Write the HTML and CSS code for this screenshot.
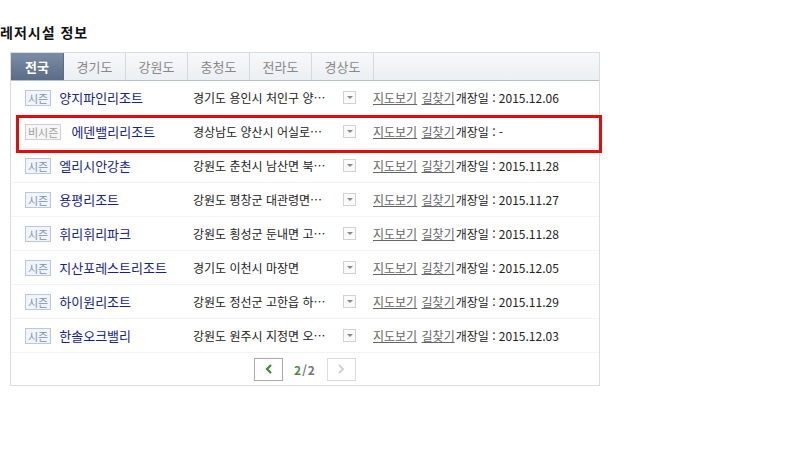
FILE: index.html
```html
<!DOCTYPE html>
<html lang="ko">
<head>
    <meta charset="UTF-8">
    <title>레저시설 정보</title>
    <link rel="stylesheet" href="styles.css">
</head>
<body>
    <h3 class="title">레저시설 정보</h3>

    <div class="leisure">
        <ul class="tabs">
            <li class="on">전국</li>
            <li>경기도</li>
            <li>강원도</li>
            <li>충청도</li>
            <li>전라도</li>
            <li>경상도</li>
        </ul>

        <ul class="list">
            <li class="row">
                <div class="name"><span class="badge">시즌</span><a href="#">양지파인리조트</a></div>
                <div class="addr">경기도 용인시 처인구 양…</div>
                <span class="more"></span>
                <div class="links"><a href="#">지도보기</a> <a href="#">길찾기</a><span>개장일 : 2015.12.06</span></div>
            </li>
            <li class="row picked">
                <div class="name"><span class="badge off">비시즌</span><a href="#">에덴밸리리조트</a></div>
                <div class="addr">경상남도 양산시 어실로…</div>
                <span class="more"></span>
                <div class="links"><a href="#">지도보기</a> <a href="#">길찾기</a><span>개장일 : -</span></div>
            </li>
            <li class="row">
                <div class="name"><span class="badge">시즌</span><a href="#">엘리시안강촌</a></div>
                <div class="addr">강원도 춘천시 남산면 북…</div>
                <span class="more"></span>
                <div class="links"><a href="#">지도보기</a> <a href="#">길찾기</a><span>개장일 : 2015.11.28</span></div>
            </li>
            <li class="row">
                <div class="name"><span class="badge">시즌</span><a href="#">용평리조트</a></div>
                <div class="addr">강원도 평창군 대관령면…</div>
                <span class="more"></span>
                <div class="links"><a href="#">지도보기</a> <a href="#">길찾기</a><span>개장일 : 2015.11.27</span></div>
            </li>
            <li class="row">
                <div class="name"><span class="badge">시즌</span><a href="#">휘리휘리파크</a></div>
                <div class="addr">강원도 횡성군 둔내면 고…</div>
                <span class="more"></span>
                <div class="links"><a href="#">지도보기</a> <a href="#">길찾기</a><span>개장일 : 2015.11.28</span></div>
            </li>
            <li class="row">
                <div class="name"><span class="badge">시즌</span><a href="#">지산포레스트리조트</a></div>
                <div class="addr">경기도 이천시 마장면</div>
                <span class="more"></span>
                <div class="links"><a href="#">지도보기</a> <a href="#">길찾기</a><span>개장일 : 2015.12.05</span></div>
            </li>
            <li class="row">
                <div class="name"><span class="badge">시즌</span><a href="#">하이원리조트</a></div>
                <div class="addr">강원도 정선군 고한읍 하…</div>
                <span class="more"></span>
                <div class="links"><a href="#">지도보기</a> <a href="#">길찾기</a><span>개장일 : 2015.11.29</span></div>
            </li>
            <li class="row">
                <div class="name"><span class="badge">시즌</span><a href="#">한솔오크밸리</a></div>
                <div class="addr">강원도 원주시 지정면 오…</div>
                <span class="more"></span>
                <div class="links"><a href="#">지도보기</a> <a href="#">길찾기</a><span>개장일 : 2015.12.03</span></div>
            </li>
        </ul>

        <div class="paging">
            <a href="#" class="btn prev">
                <svg width="8" height="10" viewBox="0 0 8 10"><path d="M6 1 L2 5 L6 9" fill="none" stroke="#3e8a35" stroke-width="2.2"/></svg>
            </a>
            <span class="count"><em>2</em>/2</span>
            <a href="#" class="btn next">
                <svg width="8" height="10" viewBox="0 0 8 10"><path d="M2 1 L6 5 L2 9" fill="none" stroke="#c8c8c8" stroke-width="1.6"/></svg>
            </a>
        </div>
    </div>
</body>
</html>
```

FILE: styles.css
```css
body {
    margin: 0;
    font-family: "Noto Sans CJK KR", "Noto Sans", sans-serif;
    font-size: 12px;
    color: #333;
    background: #fff;
}
ul {
    margin: 0;
    padding: 0;
    list-style: none;
}
.title {
    margin: 0;
    padding-top: 22px;
    height: 30px;
    font-size: 14px;
    letter-spacing: 1px;
    font-weight: bold;
    color: #111;
    line-height: 20px;
}
.leisure {
    position: relative;
    width: 588px;
    margin-left: 10px;
    border: 1px solid #d9dce1;
}
.tabs {
    display: flex;
    height: 27px;
    background: linear-gradient(#f7f8fa, #eceff3);
    border-bottom: 1px solid #b9c0cb;
}
.tabs li {
    width: 61px;
    line-height: 27px;
    text-align: center;
    color: #888;
    border-right: 1px solid #d5d9df;
    font-size: 13px;
}
.tabs li.on {
    width: 52px;
    color: #fff;
    font-weight: bold;
    background: linear-gradient(#7d8ca6, #5b6c88);
    border-right-color: #5b6c88;
}
.row {
    display: flex;
    align-items: center;
    height: 33px;
    padding-left: 14px;
    border-bottom: 1px solid #f3f3f3;
}
.name {
    display: flex;
    align-items: center;
    width: 168px;
    flex: none;
}
.name a {
    color: #14248a;
    text-decoration: none;
    font-size: 13px;
}
.badge {
    display: inline-block;
    height: 14px;
    padding: 0 2px;
    margin-right: 8px;
    line-height: 14px;
    font-size: 11px;
    color: #7d93b8;
    background: #f1f5fb;
    border: 1px solid #b8c8e0;
}
.badge.off {
    color: #a0a0a0;
    background: #f6f6f6;
    border-color: #cfcfcf;
    margin-right: 10px;
}
.addr {
    width: 150px;
    flex: none;
    white-space: nowrap;
    overflow: hidden;
    color: #222;
}
.more {
    position: relative;
    width: 11px;
    height: 11px;
    flex: none;
    border: 1px solid #d2d2d2;
    background: #fafafa;
}
.more::after {
    content: "";
    position: absolute;
    left: 3px;
    top: 4px;
    border-left: 3px solid transparent;
    border-right: 3px solid transparent;
    border-top: 3px solid #888;
}
.links {
    margin-left: 17px;
    white-space: nowrap;
    color: #222;
}
.links a {
    color: #666;
    text-decoration: underline;
    margin-right: 1px;
}
.picked::after {
    content: "";
    position: absolute;
    left: 5px;
    right: -3px;
    top: 62px;
    height: 32px;
    border: 3px solid #e30c0c;
}
.paging {
    display: flex;
    justify-content: center;
    align-items: center;
    gap: 11px;
    height: 32px;
}
.btn {
    display: flex;
    align-items: center;
    justify-content: center;
    width: 27px;
    height: 21px;
    background: #fff;
}
.btn.prev {
    border: 1px solid #a9a9a9;
}
.btn.next {
    border: 1px solid #dcdcdc;
}
.count {
    font-weight: bold;
    font-size: 12px;
    letter-spacing: 1px;
    color: #777;
}
.count em {
    font-style: normal;
    color: #4a8d3c;
}
```
